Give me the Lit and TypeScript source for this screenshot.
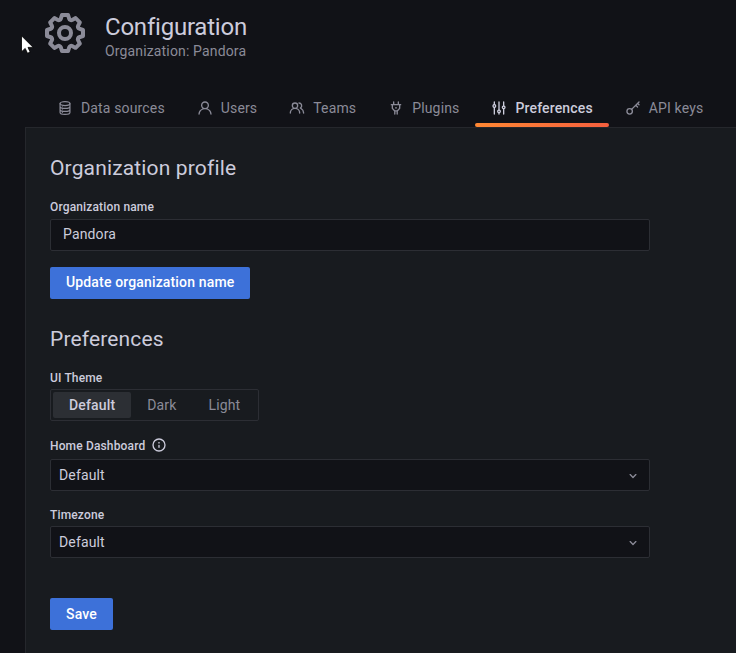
import { LitElement, html, css, svg } from "lit";
import { customElement, state } from "lit/decorators.js";

const icons = {
  cog: svg`<path d="M21.32,9.55l-1.89-.63.89-1.78A1,1,0,0,0,20.13,6L18,3.87a1,1,0,0,0-1.15-.19l-1.78.89-.63-1.89A1,1,0,0,0,13.5,2h-3a1,1,0,0,0-.95.68L8.92,4.57,7.14,3.68A1,1,0,0,0,6,3.87L3.87,6a1,1,0,0,0-.19,1.15l.89,1.78-1.89.63A1,1,0,0,0,2,10.5v3a1,1,0,0,0,.68.95l1.89.63-.89,1.78A1,1,0,0,0,3.87,18L6,20.13a1,1,0,0,0,1.15.19l1.78-.89.63,1.89a1,1,0,0,0,.95.68h3a1,1,0,0,0,.95-.68l.63-1.89,1.78.89A1,1,0,0,0,18,20.13L20.13,18a1,1,0,0,0,.19-1.15l-.89-1.78,1.89-.63A1,1,0,0,0,22,13.5v-3A1,1,0,0,0,21.32,9.55ZM20,12.78l-1.2.4A2,2,0,0,0,17.64,16l.57,1.14-1.1,1.1L16,17.64a2,2,0,0,0-2.79,1.16l-.4,1.2H11.22l-.4-1.2A2,2,0,0,0,8,17.64l-1.14.57-1.1-1.1L6.36,16A2,2,0,0,0,5.2,13.18L4,12.78V11.22l1.2-.4A2,2,0,0,0,6.36,8L5.79,6.89l1.1-1.1L8,6.36A2,2,0,0,0,10.82,5.2l.4-1.2h1.56l.4,1.2A2,2,0,0,0,16,6.36l1.14-.57,1.1,1.1L17.64,8a2,2,0,0,0,1.16,2.79l1.2.4ZM12,8a4,4,0,1,0,4,4A4,4,0,0,0,12,8Zm0,6a2,2,0,1,1,2-2A2,2,0,0,1,12,14Z"/>`,
  database: svg`<g fill="none" stroke="currentColor" stroke-width="1.8" stroke-linecap="round"><ellipse cx="12" cy="5.4" rx="7.4" ry="2.9"/><path d="M4.6,5.4v13.2c0,1.6,3.3,2.9,7.4,2.9s7.4-1.3,7.4-2.9v-13.2M4.6,9.8c0,1.6,3.3,2.9,7.4,2.9s7.4-1.3,7.4-2.9M4.6,14.2c0,1.6,3.3,2.9,7.4,2.9s7.4-1.3,7.4-2.9"/></g><circle cx="8" cy="10" r=".8"/><circle cx="8" cy="14.5" r=".8"/><circle cx="8" cy="18.6" r=".8"/>`,
  user: svg`<path d="M15.71,12.71a6,6,0,1,0-7.42,0,10,10,0,0,0-6.22,8.18,1,1,0,0,0,2,.22,8,8,0,0,1,15.9,0,1,1,0,0,0,1,.89h.11a1,1,0,0,0,.88-1.1A10,10,0,0,0,15.71,12.71ZM12,12a4,4,0,1,1,4-4A4,4,0,0,1,12,12Z"/>`,
  users: svg`<path d="M12.3,12.22A4.92,4.92,0,0,0,14,8.5a5,5,0,0,0-10,0,4.92,4.92,0,0,0,1.7,3.72A8,8,0,0,0,1,19.5a1,1,0,0,0,2,0,6,6,0,0,1,12,0,1,1,0,0,0,2,0A8,8,0,0,0,12.3,12.22ZM9,11.5a3,3,0,1,1,3-3A3,3,0,0,1,9,11.5Zm9.74.32A5,5,0,0,0,15,3.5a1,1,0,0,0,0,2,3,3,0,0,1,3,3,3,3,0,0,1-1.5,2.59,1,1,0,0,0-.5.84,1,1,0,0,0,.45.86l.39.26.13.07a7,7,0,0,1,4,6.38,1,1,0,0,0,2,0A9,9,0,0,0,18.74,11.82Z"/>`,
  plug: svg`<g fill="none" stroke="currentColor" stroke-width="2" stroke-linecap="round" stroke-linejoin="round"><path d="M8.5,3v4M15.5,3v4M5,7h14M6.5,7v5.5L9.8,16.2h4.4L17.5,12.5V7M10.2,16.2V21M13.8,16.2V21"/></g><circle cx="12" cy="11.8" r="1.3"/>`,
  sliders: svg`<path d="M20,8.18V3a1,1,0,0,0-2,0V8.18a3,3,0,0,0,0,5.64V21a1,1,0,0,0,2,0V13.82a3,3,0,0,0,0-5.64ZM19,12a1,1,0,1,1,1-1A1,1,0,0,1,19,12Zm-6,2.18V3a1,1,0,0,0-2,0V14.18a3,3,0,0,0,0,5.64V21a1,1,0,0,0,2,0V19.82a3,3,0,0,0,0-5.64ZM12,18a1,1,0,1,1,1-1A1,1,0,0,1,12,18ZM6,6.18V3A1,1,0,0,0,4,3V6.18a3,3,0,0,0,0,5.64V21a1,1,0,0,0,2,0V11.82A3,3,0,0,0,6,6.18ZM5,10A1,1,0,1,1,6,9,1,1,0,0,1,5,10Z"/>`,
  key: svg`<g fill="none" stroke="currentColor" stroke-width="2" stroke-linecap="round" stroke-linejoin="round"><circle cx="7" cy="17" r="4.1"/><path d="M9.9,14.1L21,3M16.2,7.8l2.6,2.6M18.9,5.1L21,7.2"/></g>`,
  angle: svg`<path d="M17,9.17a1,1,0,0,0-1.41,0L12,12.71,8.46,9.17a1,1,0,0,0-1.41,0,1,1,0,0,0,0,1.42l4.24,4.24a1,1,0,0,0,1.42,0L17,10.59A1,1,0,0,0,17,9.17Z"/>`,
  info: svg`<path d="M12,2A10,10,0,1,0,22,12,10,10,0,0,0,12,2Zm0,18a8,8,0,1,1,8-8A8,8,0,0,1,12,20Zm0-8.5a1,1,0,0,0-1,1v3a1,1,0,0,0,2,0v-3A1,1,0,0,0,12,11.5Zm0-4a1.25,1.25,0,1,0,1.25,1.25A1.25,1.25,0,0,0,12,7.5Z"/>`,
};

type IconName = keyof typeof icons;

const icon = (name: IconName, size = 16) =>
  html`<svg class="icon" width=${size} height=${size} viewBox="0 0 24 24" fill="currentColor">${icons[name]}</svg>`;

const tabs: { label: string; icon: IconName }[] = [
  { label: "Data sources", icon: "database" },
  { label: "Users", icon: "user" },
  { label: "Teams", icon: "users" },
  { label: "Plugins", icon: "plug" },
  { label: "Preferences", icon: "sliders" },
  { label: "API keys", icon: "key" },
];

@customElement("app-root")
export class AppRoot extends LitElement {
  @state() activeTab = "Preferences";
  @state() theme = "Default";

  static styles = css`
    :host {
      display: block;
      position: relative;
      height: 653px;
      overflow: hidden;
      background: #111217;
      color: #ccccdc;
      font: 400 14px/22px Roboto, sans-serif;
      letter-spacing: 0.15px;
    }
    * { box-sizing: border-box; }
    .icon { display: block; flex: none; }
    .page { display: flex; flex-direction: column; height: 100%; }
    .header { display: flex; height: 92px; padding: 9px 0 0 41px; color: #8b8b98; }
    .titles { padding: 3px 0 0 16px; }
    .title { margin: 0; font-size: 24px; line-height: 30px; font-weight: 400; letter-spacing: -0.22px; color: #ccccdc; }
    .subtitle { line-height: 18px; }
    .tabs { display: flex; flex: none; height: 35px; padding-left: 41px; }
    .tab {
      display: flex; gap: 8px; height: 35px; padding: 8px 16px 0; position: relative;
      line-height: 16px; color: #8b8b98; white-space: nowrap; cursor: pointer;
    }
    .tab.active { color: #ccccdc; font-weight: 500; }
    .tab.active::after {
      content: ""; position: absolute; left: 0; right: 0; bottom: 0; height: 4px;
      border-radius: 2px; background: linear-gradient(90deg, #ff8833, #f55f3e);
    }
    .panel {
      flex: 1; margin-left: 25px; padding: 24px 24px 0; background: #181b1f;
      border-top: 1px solid #25272c; border-left: 1px solid #25272c;
    }
    .form { width: 600px; }
    .section { margin: 0; font-size: 21px; line-height: 32px; font-weight: 400; letter-spacing: 0.15px; }
    .label { display: flex; align-items: center; gap: 6px; height: 16px; font-size: 12px; line-height: 16px; font-weight: 500; }
    .label .icon { margin-bottom: 2px; }
    .field {
      display: flex; align-items: center; justify-content: space-between; width: 600px; height: 32px;
      background: #111217; border: 1px solid #2c2e34; border-radius: 2px; padding: 0 8px;
    }
    .field .icon { color: #8b8b98; margin-top: 2px; }
    input.field { padding: 0 12px 2px; color: inherit; font: inherit; letter-spacing: inherit; outline: none; }
    .button {
      display: block; height: 32px; padding: 0 16px; border: 0; border-radius: 2px;
      background: #3d71d9; color: #fff; font: 500 14px/30px Roboto, sans-serif; letter-spacing: 0.15px;
    }
    .radio { display: inline-flex; height: 32px; padding: 2px; border: 1px solid #2c2e34; border-radius: 2px; }
    .option { padding: 0 16px; line-height: 26px; color: #8b8b98; border-radius: 2px; cursor: pointer; }
    .option.on { background: #2c2f34; color: #ccccdc; font-weight: 500; }
    .label-org { margin: 15px 0 4px; }
    .update { margin: 16px 0 24px; padding-bottom: 2px; }
    .label-theme { margin: 15px 0 3px; }
    .theme { display: flex; }
    .label-home { margin: 17px 0 5px; }
    .label-zone { margin: 16px 0 3px; }
    .save { margin-top: 40px; }
    .cursor { position: absolute; left: 21px; top: 35px; }
  `;

  render() {
    return html`
      <div class="page">
        <header class="header">
          ${icon("cog", 48)}
          <div class="titles">
            <h1 class="title">Configuration</h1>
            <div class="subtitle">Organization: Pandora</div>
          </div>
        </header>
        <nav class="tabs">
          ${tabs.map(
            (t) => html`<a class="tab ${t.label === this.activeTab ? "active" : ""}" @click=${() => (this.activeTab = t.label)}>
              ${icon(t.icon)}<span>${t.label}</span></a>`
          )}
        </nav>
        <main class="panel">
          <div class="form">
            <h2 class="section">Organization profile</h2>
            <div class="label label-org">Organization name</div>
            <input class="field" value="Pandora" />
            <button class="button update">Update organization name</button>
            <h2 class="section">Preferences</h2>
            <div class="label label-theme">UI Theme</div>
            <div class="theme">
              <div class="radio">
                ${["Default", "Dark", "Light"].map(
                  (o) => html`<span class="option ${o === this.theme ? "on" : ""}" @click=${() => (this.theme = o)}>${o}</span>`
                )}
              </div>
            </div>
            <div class="label label-home">Home Dashboard ${icon("info")}</div>
            <div class="field"><span>Default</span>${icon("angle")}</div>
            <div class="label label-zone">Timezone</div>
            <div class="field"><span>Default</span>${icon("angle")}</div>
            <button class="button save">Save</button>
          </div>
        </main>
      </div>
      <svg class="cursor" width="13" height="19" viewBox="0 0 13 19">
        <path d="M.5,.8V16.8L4.2,13.4L6.5,18.3L9.2,17.1L7,12.4H12.2Z" fill="#fff" stroke="#000" stroke-width=".8"/>
      </svg>
    `;
  }
}
